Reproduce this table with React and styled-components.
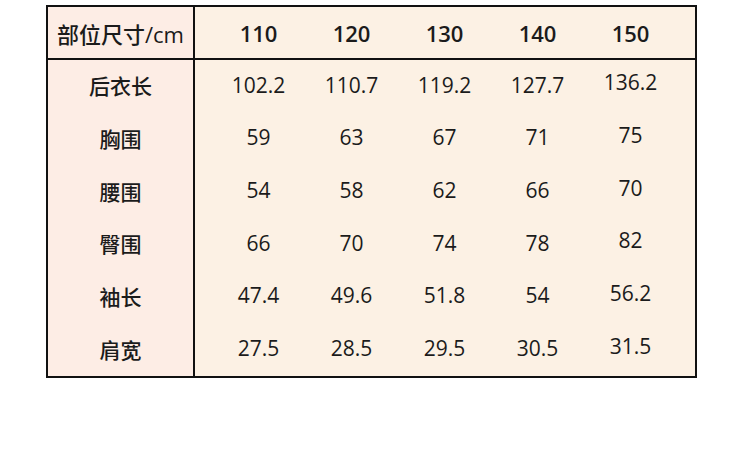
import styled, { createGlobalStyle } from "styled-components";

const HEADERS = ["110", "120", "130", "140", "150"];

const ROWS = [
    { label: "后衣长", values: ["102.2", "110.7", "119.2", "127.7", "136.2"] },
    { label: "胸围", values: ["59", "63", "67", "71", "75"] },
    { label: "腰围", values: ["54", "58", "62", "66", "70"] },
    { label: "臀围", values: ["66", "70", "74", "78", "82"] },
    { label: "袖长", values: ["47.4", "49.6", "51.8", "54", "56.2"] },
    { label: "肩宽", values: ["27.5", "28.5", "29.5", "30.5", "31.5"] },
];

const GlobalStyle = createGlobalStyle`
    body {
        margin: 0;
        background: #ffffff;
        font-family: "Open Sans", "Noto Sans CJK SC", sans-serif;
        color: #1b1b1b;
    }
`;

const Page = styled.div`
    width: 750px;
    height: 456px;
    padding: 5px 0 0 46px;
    box-sizing: border-box;
`;

const Table = styled.div`
    width: 651px;
    height: 373px;
    box-sizing: border-box;
    border: 2px solid #111;
    display: grid;
    grid-template-columns: 145px 2px 1fr;
    grid-template-rows: 51px 2px 1fr;
    background: #fcf1e4;
`;

const LabelColumn = styled.div`
    background: #fdede5;
    display: flex;
    align-items: center;
    justify-content: center;
`;

const Line = styled.div`
    background: #111;
    grid-column: ${({$span}) => $span || "auto"};
`;

const HeaderValues = styled.div`
    display: grid;
    grid-template-columns: repeat(5, 1fr);
    padding: 0 18px 0 17px;
    align-items: center;
`;

const BodyLabels = styled.div`
    background: #fdede5;
    display: grid;
    grid-template-rows: repeat(6, 1fr);
`;

const BodyValues = styled.div`
    display: grid;
    grid-template-columns: repeat(5, 1fr);
    grid-template-rows: repeat(6, 1fr);
    padding: 0 18px 0 17px;
`;

const HeaderText = styled.span`
    font-size: 22px;
    font-weight: 500;
`;

const HeaderNumber = styled.span`
    font-size: 22px;
    font-weight: 600;
    text-align: center;
`;

const RowLabel = styled.div`
    font-size: 21px;
    font-weight: 500;
    display: flex;
    align-items: center;
    justify-content: center;
    padding-bottom: 2px;
`;

const Cell = styled.div`
    font-size: 21px;
    display: flex;
    align-items: center;
    justify-content: center;
    padding-bottom: ${({$raised}) => $raised ? "8px" : "3px"};
`;

export default function App() {
    return (
        <>
            <GlobalStyle />
            <Page>
                <Table>
                    <LabelColumn>
                        <HeaderText>部位尺寸/cm</HeaderText>
                    </LabelColumn>
                    <Line />
                    <HeaderValues>
                        {HEADERS.map((h) => (
                            <HeaderNumber key={h}>{h}</HeaderNumber>
                        ))}
                    </HeaderValues>
                    <Line $span="1 / 4" />
                    <BodyLabels>
                        {ROWS.map((row) => (
                            <RowLabel key={row.label}>{row.label}</RowLabel>
                        ))}
                    </BodyLabels>
                    <Line />
                    <BodyValues>
                        {ROWS.map((row) =>
                            row.values.map((v, i) => (
                                <Cell key={row.label + i} $raised={i === 4}>
                                    {v}
                                </Cell>
                            ))
                        )}
                    </BodyValues>
                </Table>
            </Page>
        </>
    );
}
